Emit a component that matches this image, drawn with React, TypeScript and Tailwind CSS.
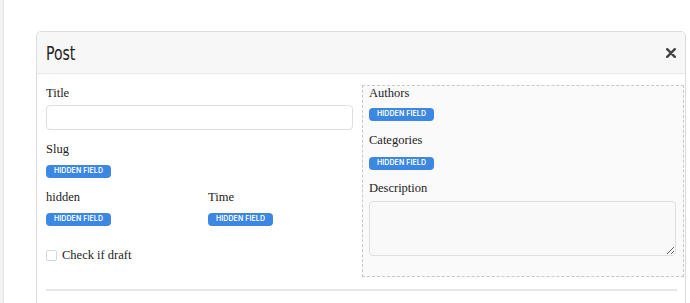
import type { ReactNode } from 'react';

// ── Hidden field badge ────────────────────────────────────────────────────────

function HiddenBadge({ className = '' }: { className?: string }) {
  return (
    <div
      className={`flex h-[13px] w-[65px] items-center justify-center rounded-[4px] bg-[#3b87e2] font-['Inter',sans-serif] text-[7px] font-semibold tracking-[0.1px] text-white ${className}`}
    >
      HIDDEN FIELD
    </div>
  );
}

function Label({ children, tight = false, className = '' }: { children: ReactNode; tight?: boolean; className?: string }) {
  return (
    <div
      className={`font-['Liberation_Serif',serif] text-[12.5px] text-[#222] ${tight ? 'leading-[14px]' : 'leading-[16px]'} ${className}`}
    >
      {children}
    </div>
  );
}

// ── Page ──────────────────────────────────────────────────────────────────────

export default function App() {
  return (
    <div className="flex h-[303px] w-[690px] overflow-hidden bg-white">
      <div className="h-full w-[4px] shrink-0 border-r border-[#e2e2e2] bg-[#f3f3f3]" />

      <div className="ml-[32px] mt-[31px] w-[650px] shrink-0">
        <div className="rounded-t-[5px] border border-[#dcdcdc]">
          {/* header */}
          <div className="flex h-[42px] items-center justify-between rounded-t-[5px] border-b border-[#e8e8e8] bg-[#f7f7f7] pl-[9px] pr-[9px]">
            <span className="inline-block origin-left scale-x-[0.78] font-['DejaVu_Sans_Condensed',sans-serif] text-[20px] font-light text-[#222]">
              Post
            </span>
            <svg className="h-[10px] w-[10px]" viewBox="0 0 10 10" fill="none" stroke="#444" strokeWidth={2.4} strokeLinecap="round">
              <path d="M1.2 1.2l7.6 7.6M8.8 1.2L1.2 8.8" />
            </svg>
          </div>

          {/* body */}
          <div className="flex gap-[9px] pl-[9px] pr-[1px] pt-[11px]">
            <div className="w-[307px] shrink-0">
              <Label>Title</Label>
              <div className="mt-[4px] h-[25px] rounded-[4px] border border-[#dedede] bg-white" />

              <Label className="mt-[11px]">Slug</Label>
              <HiddenBadge className="mt-[8px]" />

              <div className="mt-[11px] grid grid-cols-[162px_1fr]">
                <div>
                  <Label>hidden</Label>
                  <HiddenBadge className="mt-[8px]" />
                </div>
                <div>
                  <Label>Time</Label>
                  <HiddenBadge className="mt-[8px]" />
                </div>
              </div>

              <div className="mt-[21px] flex items-center gap-[5px]">
                <div className="h-[11px] w-[11px] rounded-[2px] border border-[#d6d6d6] bg-white" />
                <Label>Check if draft</Label>
              </div>
            </div>

            <div className="flex-1 border border-dashed border-[#c8c8c8] bg-[#fafafa] px-[6px] pb-[20px]">
              <Label tight>Authors</Label>
              <HiddenBadge className="mt-[8px]" />

              <Label tight className="mt-[12px]">Categories</Label>
              <HiddenBadge className="mt-[10px]" />

              <Label tight className="mt-[11px]">Description</Label>
              <textarea className="mt-[6px] block h-[55px] w-[307px] rounded-[4px] border border-[#e0e0e0] bg-[#f9f9f9]" />
            </div>
          </div>

          <div className="mx-[9px] mt-[12px] h-[2px] w-[631px] bg-[#e6e6e6]" />
          <div className="h-[40px]" />
        </div>
      </div>
    </div>
  );
}
